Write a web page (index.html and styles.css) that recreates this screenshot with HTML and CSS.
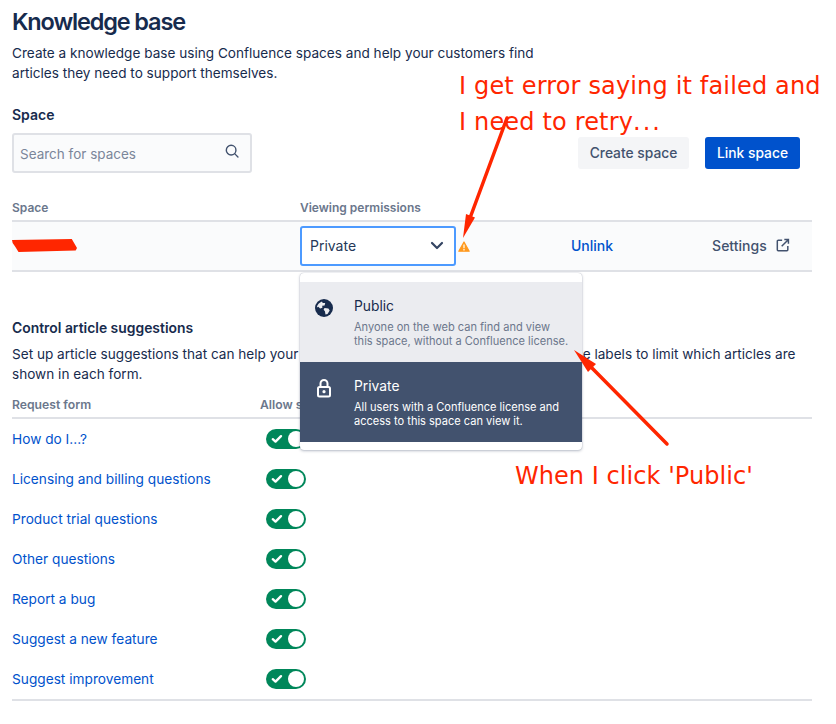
FILE: index.html
```html
<!DOCTYPE html>
<html lang="en">
<head>
<meta charset="utf-8">
<title>Knowledge base</title>
<link rel="stylesheet" href="styles.css">
</head>
<body>
<main class="page">
  <h1 class="title">Knowledge base</h1>
  <p class="intro">Create a knowledge base using Confluence spaces and help your customers find<br>articles they need to support themselves.</p>

  <h2 class="field-label">Space</h2>
  <div class="toolbar">
    <div class="search">
      <span class="search-text">Search for spaces</span>
      <svg class="search-icon" width="14" height="14" viewBox="0 0 16 16" fill="none" stroke="#42526e" stroke-width="1.600"><circle cx="7" cy="7" r="5.500"/><path d="M11 11l3.800 3.800" stroke-linecap="round"/></svg>
    </div>
    <div class="actions">
      <span class="btn btn-light">Create space</span>
      <span class="btn btn-primary">Link space</span>
    </div>
  </div>

  <div class="space-head">
    <span class="col-space">Space</span>
    <span>Viewing permissions</span>
  </div>
  <div class="space-row">
    <span class="col-space"><span class="redact"></span></span>
    <div class="select-wrap">
      <div class="select">
        <span>Private</span>
        <svg width="14" height="9" viewBox="0 0 14 9" fill="none" stroke="#344563" stroke-width="2.200" stroke-linecap="round" stroke-linejoin="round"><path d="M2 2l5 5 5-5"/></svg>
      </div>
      <div class="menu">
        <div class="option option-public">
          <svg class="option-icon" width="20" height="20" viewBox="0 0 20 20"><circle cx="10" cy="10" r="9" fill="#172b4d"/><path d="M2.800 9.500c.4-2.800 2.600-5 5.200-5.900l.7 1.400 2.500.1-.6 2.300-2.400.4.200 1.900-2.300.7-1.800-1.700zM10.500 10l3.900.6 1.300 1.900-2.200 3.400-2 .6-.6-3.200-1.300-1.500z" fill="#ebecf0"/></svg>
          <div>
            <div class="option-title">Public</div>
            <div class="option-desc">Anyone on the web can find and view<br>this space, without a Confluence license.</div>
          </div>
        </div>
        <div class="option option-private">
          <svg class="option-icon" width="20" height="20" viewBox="0 0 20 20"><path d="M6.500 9V5.500a3.500 3.500 0 0 1 7 0V9" fill="none" stroke="#fff" stroke-width="2"/><rect x="4" y="9" width="12" height="9.500" rx="1.500" fill="none" stroke="#fff" stroke-width="2"/><circle cx="10" cy="13.700" r="1.600" fill="#fff"/></svg>
          <div>
            <div class="option-title">Private</div>
            <div class="option-desc">All users with a Confluence license and<br>access to this space can view it.</div>
          </div>
        </div>
      </div>
    </div>
    <svg class="warn" width="12" height="11" viewBox="0 0 12 11"><path d="M6 1l5.200 9.200H.8z" fill="#ff991f" stroke="#ff991f" stroke-width="1.200" stroke-linejoin="round"/><path d="M5.300 3.500h1.400v3.700H5.300zM5.300 8h1.400v1.400H5.300z" fill="#fff2d9"/></svg>
    <a class="unlink">Unlink</a>
    <span class="settings">Settings
      <svg width="14" height="14" viewBox="0 0 16 16" fill="none" stroke="#42526e" stroke-width="1.700"><path d="M7 2.500H2.500a1 1 0 0 0-1 1v10a1 1 0 0 0 1 1h10a1 1 0 0 0 1-1V9"/><path d="M6.500 9.500L14 2M9.500 1.800h4.700v4.700"/></svg>
    </span>
  </div>

  <h2 class="section-title">Control article suggestions</h2>
  <p class="section-text">Set up article suggestions that can help your customers find all answers. You can also use labels to limit which articles are<br>shown in each form.</p>

  <div class="form-head">
    <span class="col-form">Request form</span>
    <span>Allow suggestions</span>
  </div>
  <ul class="forms">
    <li class="form-row"><a class="col-form">How do I...?</a><span class="toggle"><svg width="12" height="10" viewBox="0 0 12 10" fill="none" stroke="#fff" stroke-width="2.400" stroke-linecap="round" stroke-linejoin="round"><path d="M1.800 5.200l2.700 2.400 5.500-5.400"/></svg><span class="knob"></span></span></li>
    <li class="form-row"><a class="col-form">Licensing and billing questions</a><span class="toggle"><svg width="12" height="10" viewBox="0 0 12 10" fill="none" stroke="#fff" stroke-width="2.400" stroke-linecap="round" stroke-linejoin="round"><path d="M1.800 5.200l2.700 2.400 5.500-5.400"/></svg><span class="knob"></span></span></li>
    <li class="form-row"><a class="col-form">Product trial questions</a><span class="toggle"><svg width="12" height="10" viewBox="0 0 12 10" fill="none" stroke="#fff" stroke-width="2.400" stroke-linecap="round" stroke-linejoin="round"><path d="M1.800 5.200l2.700 2.400 5.500-5.400"/></svg><span class="knob"></span></span></li>
    <li class="form-row"><a class="col-form">Other questions</a><span class="toggle"><svg width="12" height="10" viewBox="0 0 12 10" fill="none" stroke="#fff" stroke-width="2.400" stroke-linecap="round" stroke-linejoin="round"><path d="M1.800 5.200l2.700 2.400 5.500-5.400"/></svg><span class="knob"></span></span></li>
    <li class="form-row"><a class="col-form">Report a bug</a><span class="toggle"><svg width="12" height="10" viewBox="0 0 12 10" fill="none" stroke="#fff" stroke-width="2.400" stroke-linecap="round" stroke-linejoin="round"><path d="M1.800 5.200l2.700 2.400 5.500-5.400"/></svg><span class="knob"></span></span></li>
    <li class="form-row"><a class="col-form">Suggest a new feature</a><span class="toggle"><svg width="12" height="10" viewBox="0 0 12 10" fill="none" stroke="#fff" stroke-width="2.400" stroke-linecap="round" stroke-linejoin="round"><path d="M1.800 5.200l2.700 2.400 5.500-5.400"/></svg><span class="knob"></span></span></li>
    <li class="form-row"><a class="col-form">Suggest improvement</a><span class="toggle"><svg width="12" height="10" viewBox="0 0 12 10" fill="none" stroke="#fff" stroke-width="2.400" stroke-linecap="round" stroke-linejoin="round"><path d="M1.800 5.200l2.700 2.400 5.500-5.400"/></svg><span class="knob"></span></span></li>
  </ul>
</main>

<div class="note note-error">I get error saying it failed and<br>I need to retry<span class="dots">...</span></div>
<div class="note note-click">When I click 'Public'</div>
<svg class="arrows" width="836" height="724" viewBox="0 0 836 724">
  <path d="M507 118L470 218" stroke="#ff2600" stroke-width="3.500" stroke-linecap="round" fill="none"/>
  <path d="M463 238L466 214L475 217.500z" fill="#ff2600"/>
  <path d="M667 444L590 366" stroke="#ff2600" stroke-width="3.500" stroke-linecap="round" fill="none"/>
  <path d="M574 350L596 364L588 372z" fill="#ff2600"/>
</svg>
</body>
</html>
```
FILE: styles.css
```css
* { box-sizing: border-box; }
html, body { margin: 0; padding: 0; background: #fff; }
body {
  position: relative;
  width: 836px;
  height: 724px;
  overflow: hidden;
  font-family: Inter, "Liberation Sans", sans-serif;
  font-size: 13.6px;
  color: #172b4d;
}
.page { padding: 8px 24px 0 12px; }
.title { margin: 0; font-size: 23.5px; line-height: 28px; font-weight: 600; letter-spacing: -1.15px; }
.intro { margin: 7px 0 0; line-height: 20px; }
.field-label { margin: 22px 0 0; font-size: 14px; line-height: 20px; font-weight: 600; }

.toolbar { display: flex; align-items: center; justify-content: space-between; margin-top: 8px; padding-right: 12px; }
.search {
  width: 240px; height: 40px; padding: 0 11px 0 6px;
  display: flex; align-items: center; justify-content: space-between;
  background: #fafbfc; border: 2px solid #dfe1e6; border-radius: 3px;
  color: #7a869a; font-size: 13.5px;
}
.search-text { padding-top: 1px; }
.search-icon { margin-top: -4px; }
.actions { display: flex; gap: 16px; }
.btn { display: flex; align-items: center; justify-content: center; height: 32px; border-radius: 3px; font-size: 13.8px; font-weight: 500; }
.btn-light { width: 111px; background: #f4f5f7; color: #42526e; }
.btn-primary { width: 95px; background: #0052cc; color: #fff; }

.space-head, .form-head {
  display: flex; align-items: center;
  font-size: 12px; font-weight: 600; color: #6b778c;
}
.space-head { margin-top: 26px; height: 21px; padding-bottom: 5px; }
.col-space { width: 288px; flex: none; }
.space-row {
  display: flex; align-items: center; height: 52px;
  background: #fafbfc;
  border-top: 2px solid #dfe1e6; border-bottom: 2px solid #dfe1e6;
}
.redact {
  display: block; width: 65px; height: 13px; margin-top: -1px;
  background: #ff2600;
  clip-path: polygon(0 8%, 92% 0, 100% 70%, 98% 88%, 10% 100%, 5% 60%, 1% 30%);
}
.select-wrap { position: relative; width: 156px; flex: none; }
.select {
  height: 40px; padding: 0 10px 1px 8px;
  display: flex; align-items: center; justify-content: space-between;
  background: #fff; border: 2px solid #4c9aff; border-radius: 3px; color: #253858; font-size: 14px;
}
.warn { margin-left: 2px; flex: none; }
.unlink { margin-left: 101px; margin-bottom: 2px; color: #0052cc; font-size: 14px; font-weight: 500; }
.settings { display: flex; align-items: center; gap: 9px; margin-left: 99px; margin-bottom: 2px; color: #42526e; font-size: 14px; font-weight: 500; }

.menu {
  position: absolute; left: 0; top: 47px; z-index: 2;
  width: 282px; padding: 9px 0 8px;
  background: #fff; border-radius: 4px;
  box-shadow: 0 1px 3px rgba(9, 30, 66, .28), 0 0 1px rgba(9, 30, 66, .31);
}
.option { display: flex; height: 80px; padding: 14px 8px 0 14px; gap: 20px; }
.option-public { background: #ebecf0; }
.option-private { background: #42526e; color: #fff; }
.option-icon { flex: none; margin-top: 2px; }
.option-title { font-size: 13.8px; line-height: 20px; }
.option-desc { margin-top: 4px; font-size: 11.05px; line-height: 14px; color: #6b778c; white-space: nowrap; }
.option-private .option-desc { color: #fff; }

.section-title { margin: 46px 0 0; font-size: 13.9px; line-height: 20px; font-weight: 600; }
.section-text { margin: 6px 0 0; line-height: 20px; }
.form-head { margin-top: 11px; height: 22px; padding-bottom: 3px; font-size: 12.2px; }
.col-form { width: 248px; flex: none; }
.forms { list-style: none; margin: 0; padding: 0; border-top: 2px solid #dfe1e6; border-bottom: 2px solid #dfe1e6; }
.form-row { display: flex; align-items: center; height: 40px; color: #0052cc; font-size: 13.7px; }
.form-row .col-form { width: 254px; }
.toggle {
  position: relative; display: flex; align-items: center;
  width: 40px; height: 20px; padding-left: 5px;
  background: #00875a; border-radius: 10px;
}
.knob { position: absolute; right: 2px; top: 2px; width: 16px; height: 16px; border-radius: 50%; background: #fff; }

.note {
  position: absolute; z-index: 3;
  font-family: "DejaVu Sans", sans-serif; font-size: 24px; line-height: 36px; color: #ff2600; white-space: nowrap;
}
.note-error { left: 459px; top: 68px; letter-spacing: 0.16px; }
.dots { letter-spacing: 2px; }
.note-click { left: 515px; top: 458px; letter-spacing: 0.05px; }
.arrows { position: absolute; left: 0; top: 0; z-index: 4; pointer-events: none; }
```
